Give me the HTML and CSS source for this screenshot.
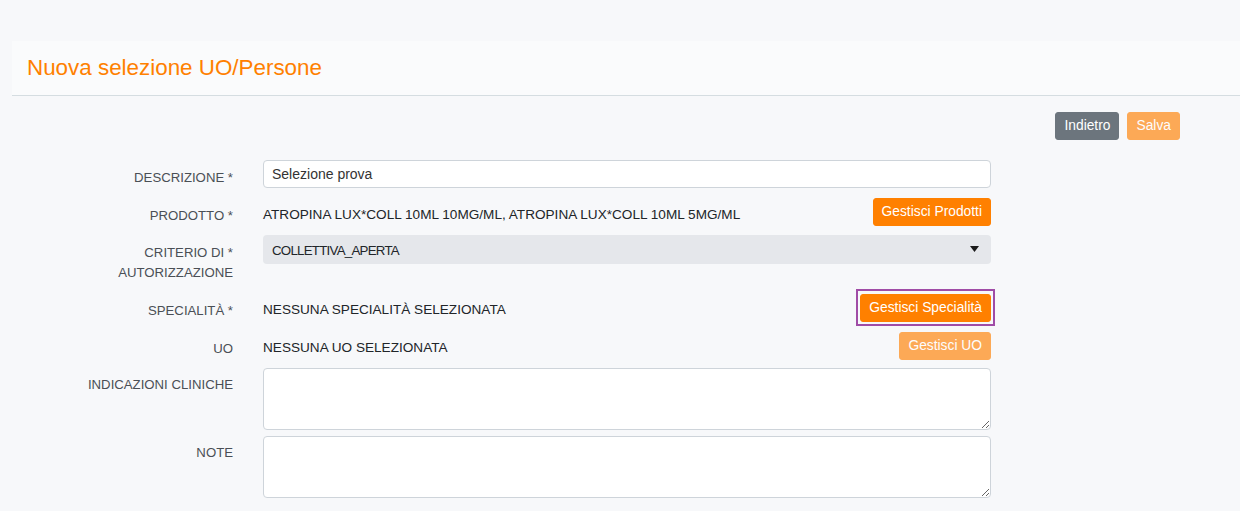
FILE: index.html
```html
<!DOCTYPE html>
<html lang="it">
<head>
<meta charset="utf-8">
<title>Nuova selezione UO/Persone</title>
<link rel="stylesheet" href="styles.css">
</head>
<body>
<div class="page">
  <div class="panel-header">
    <h1 class="title">Nuova selezione UO/Persone</h1>
  </div>
  <div class="actions">
    <button class="btn btn-grey">Indietro</button>
    <button class="btn btn-orange is-disabled">Salva</button>
  </div>
  <form class="form">
    <div class="form-row">
      <label class="form-label">DESCRIZIONE *</label>
      <div class="form-field">
        <input class="input" type="text" value="Selezione prova">
      </div>
    </div>
    <div class="form-row">
      <label class="form-label">PRODOTTO *</label>
      <div class="form-field split">
        <span class="value">ATROPINA LUX*COLL 10ML 10MG/ML, ATROPINA LUX*COLL 10ML 5MG/ML</span>
        <button type="button" class="btn btn-orange">Gestisci Prodotti</button>
      </div>
    </div>
    <div class="form-row row-tall">
      <label class="form-label">CRITERIO DI *<br>AUTORIZZAZIONE</label>
      <div class="form-field">
        <div class="select-wrap">
          <select class="select"><option>COLLETTIVA_APERTA</option></select>
          <svg class="select-arrow" width="9" height="6" viewBox="0 0 9 6"><path d="M0 0h9L4.5 6z" fill="#1a1a1a"/></svg>
        </div>
      </div>
    </div>
    <div class="form-row">
      <label class="form-label">SPECIALITÀ *</label>
      <div class="form-field split">
        <span class="value">NESSUNA SPECIALITÀ SELEZIONATA</span>
        <button type="button" class="btn btn-orange is-focused">Gestisci Specialità</button>
      </div>
    </div>
    <div class="form-row">
      <label class="form-label">UO</label>
      <div class="form-field split">
        <span class="value">NESSUNA UO SELEZIONATA</span>
        <button type="button" class="btn btn-orange is-disabled">Gestisci UO</button>
      </div>
    </div>
    <div class="form-row row-area">
      <label class="form-label">INDICAZIONI CLINICHE</label>
      <div class="form-field">
        <textarea class="textarea"></textarea>
      </div>
    </div>
    <div class="form-row row-close">
      <label class="form-label">NOTE</label>
      <div class="form-field">
        <textarea class="textarea"></textarea>
      </div>
    </div>
  </form>
</div>
</body>
</html>
```

FILE: styles.css
```css
* { box-sizing: border-box; }

html, body {
  margin: 0;
  background: #f7f8fa;
  font-family: "Liberation Sans", Arial, sans-serif;
  color: #212529;
}

.page {
  padding-top: 41px;
  padding-left: 12px;
}

.panel-header {
  background: #fafbfc;
  border-bottom: 1px solid #d5dde1;
  height: 55px;
  padding-left: 15px;
  display: flex;
  align-items: center;
}

.title {
  margin: 0;
  font-weight: normal;
  font-size: 22.4px;
  color: #ff8000;
  line-height: 1;
}

.actions {
  display: flex;
  justify-content: flex-end;
  gap: 8px;
  padding-top: 16px;
  padding-right: 60px;
}

.btn {
  position: relative;
  font-family: "Liberation Sans", Arial, sans-serif;
  font-size: 13.8px;
  line-height: 20px;
  height: 28px;
  padding: 3px 8px;
  border: 1px solid transparent;
  border-radius: 3px;
  color: #fff;
  cursor: pointer;
  white-space: nowrap;
}

.btn-grey {
  background: #6c757d;
  border-color: #6c757d;
}

.btn-orange {
  background: #ff8000;
  border-color: #ff8000;
}

.btn.is-disabled {
  opacity: 0.65;
}

.btn.is-focused::after {
  content: "";
  position: absolute;
  left: -5px;
  right: -5px;
  top: -6px;
  bottom: -5px;
  border: 2px solid #a04ca6;
  pointer-events: none;
}

.form {
  margin-top: 20px;
  display: flex;
  flex-direction: column;
  gap: 10px;
}

.form-row {
  display: grid;
  grid-template-columns: 221px 728px;
  column-gap: 30px;
  align-items: start;
}

.row-tall {
  margin-top: -1px;
}

.row-tall .form-label {
  padding-bottom: 1px;
}

.row-area {
  margin-top: -2px;
}

.row-close {
  margin-top: -4px;
}

.form-label {
  text-align: right;
  font-size: 13.2px;
  line-height: 20px;
  padding-top: 7.5px;
  color: #4a4f55;
}

.form-field {
  min-width: 0;
}

.split {
  display: flex;
  justify-content: space-between;
  align-items: flex-start;
}

.value {
  font-size: 13.6px;
  line-height: 20px;
  padding-top: 6.5px;
  color: #212529;
}

.input {
  display: block;
  width: 100%;
  height: 28px;
  border: 1px solid #ced4da;
  border-radius: 4px;
  background: #fff;
  padding: 0 8px;
  font-family: "Liberation Sans", Arial, sans-serif;
  font-size: 14px;
  color: #333;
}

.select-wrap {
  position: relative;
}

.select {
  display: block;
  width: 100%;
  height: 29px;
  appearance: none;
  -webkit-appearance: none;
  border: 0;
  border-radius: 4px;
  background: #e5e7eb;
  padding: 2px 9px 0;
  font-family: "Liberation Sans", Arial, sans-serif;
  font-size: 13.3px;
  letter-spacing: -0.75px;
  color: #212529;
}

.select-arrow {
  position: absolute;
  right: 12px;
  top: 11px;
}

.textarea {
  display: block;
  width: 100%;
  height: 62px;
  border: 1px solid #ced4da;
  border-radius: 4px;
  background: #fff;
  font-family: "Liberation Sans", Arial, sans-serif;
  font-size: 14px;
  padding: 6px 8px;
  resize: vertical;
}
```
